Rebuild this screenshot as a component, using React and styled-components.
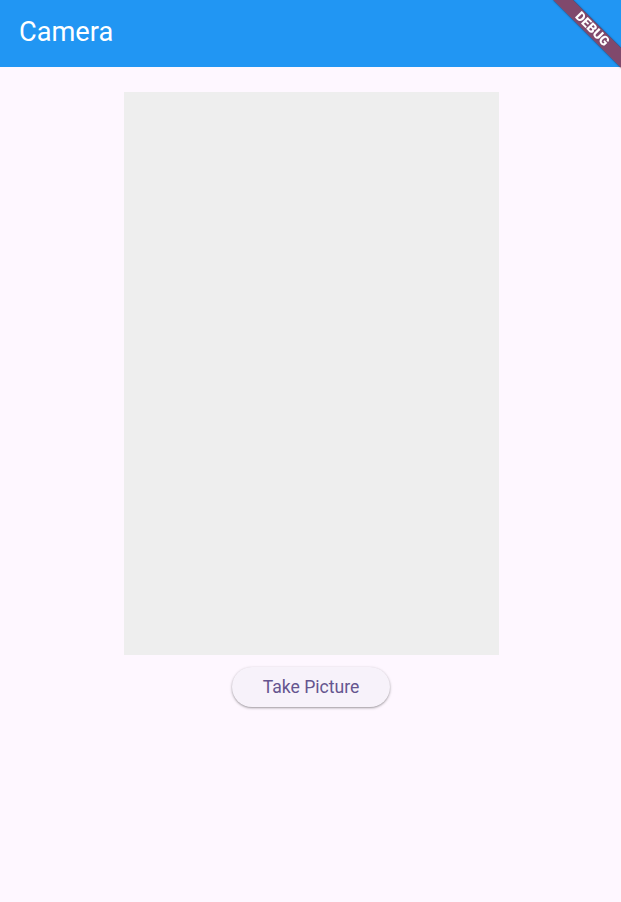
import React from 'react';
import styled, { createGlobalStyle } from 'styled-components';

const GlobalStyle = createGlobalStyle`
  html, body {
    margin: 0;
    padding: 0;
    background: #fef7ff;
    font-family: Roboto, "Noto Sans", sans-serif;
    overflow: hidden;
  }
`;

const Page = styled.div`
  min-height: 100vh;
  display: flex;
  flex-direction: column;
  background: #fef7ff;
`;

const AppBar = styled.header`
  height: 67px;
  background: #2196f3;
  display: flex;
  align-items: center;
  padding: 0 19px 3px;
  box-sizing: border-box;
`;

const Title = styled.h1`
  margin: 0;
  font-size: 27.2px;
  font-weight: 400;
  color: #ffffff;
  letter-spacing: 0;
`;

const Body = styled.main`
  display: flex;
  flex-direction: column;
  align-items: center;
  padding-top: 25px;
  gap: 12px;
  padding-left: 1px;
`;

const Preview = styled.div`
  width: 375px;
  height: 563px;
  background: #eeeeee;
`;

const Button = styled.button`
  height: 40px;
  width: 158px;
  border: none;
  border-radius: 20px;
  background: #f7f2fa;
  color: #65558f;
  font-family: Roboto, sans-serif;
  font-size: 17.6px;
  font-weight: 400;
  box-shadow: 0 1px 2px rgba(0, 0, 0, 0.3), 0 1px 3px 1px rgba(0, 0, 0, 0.08);
  cursor: pointer;
`;

// Flutter-style debug ribbon in the top right corner
const BannerClip = styled.div`
  position: fixed;
  top: 0;
  right: 0;
  width: 100px;
  height: 100px;
  overflow: hidden;
  pointer-events: none;
`;

const Ribbon = styled.div`
  position: absolute;
  left: 23.2px;
  top: 21.7px;
  width: 96px;
  height: 14.4px;
  transform: rotate(45deg);
  background: rgba(183, 28, 28, 0.63);
  box-shadow: 0 0 2px rgba(0, 0, 0, 0.5);
  color: #ffffff;
  font-family: Roboto, sans-serif;
  font-weight: 900;
  font-size: 13.2px;
  line-height: 14.4px;
  text-align: center;
`;

export default function App() {
  return (
    <Page>
      <GlobalStyle />
      <AppBar>
        <Title>Camera</Title>
      </AppBar>
      <Body>
        <Preview />
        <Button>Take Picture</Button>
      </Body>
      <BannerClip>
        <Ribbon>DEBUG</Ribbon>
      </BannerClip>
    </Page>
  );
}
